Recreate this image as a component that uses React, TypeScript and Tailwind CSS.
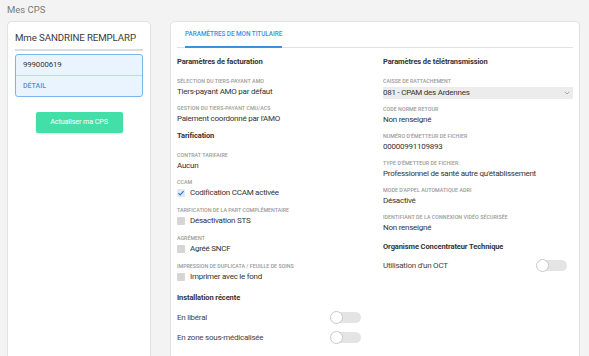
import { ChevronDown } from 'lucide-react';

type FieldProps = { label: string; value: string; className?: string };

function Field({ label, value, className = '' }: FieldProps) {
  return (
    <div className={className}>
      <div className="h-[8px] leading-[8px] text-[5.3px] font-medium uppercase text-[#9a9a9a] tracking-[0.05px]">
        {label}
      </div>
      <div className="mt-[2px] h-[10px] leading-[10px] text-[8px] text-[#333] tracking-[-0.25px] whitespace-nowrap">
        {value}
      </div>
    </div>
  );
}

function Check({ label, text, checked, className = '' }: { label: string; text: string; checked?: boolean; className?: string }) {
  return (
    <div className={className}>
      <div className="h-[8px] leading-[8px] text-[5.3px] font-medium uppercase text-[#9a9a9a]">{label}</div>
      <div className="mt-[2px] h-[10px] flex items-center gap-[5px]">
        {checked ? (
          <span className="w-[8px] h-[8px] rounded-[1px] bg-[#e3e9f0] flex items-center justify-center">
            <svg viewBox="0 0 10 10" className="w-[8px] h-[8px]">
              <path d="M1.8 5.2 L4 7.3 L8.4 2.6" fill="none" stroke="#2f80d8" strokeWidth="1.6" />
            </svg>
          </span>
        ) : (
          <span className="w-[8px] h-[8px] rounded-[1px] bg-[#d6d6d6]" />
        )}
        <span className="leading-[10px] text-[8px] text-[#333] tracking-[-0.25px]">{text}</span>
      </div>
    </div>
  );
}

function Heading({ children, className = '' }: { children: string; className?: string }) {
  return (
    <div className={`h-[12px] leading-[12px] text-[7.5px] font-bold text-[#333] tracking-[-0.1px] ${className}`}>
      {children}
    </div>
  );
}

function Toggle({ label, className = '' }: { label: string; className?: string }) {
  return (
    <div className={`h-[14px] flex items-center justify-between pr-[6px] ${className}`}>
      <span className="text-[8px] text-[#444] tracking-[-0.25px]">{label}</span>
      <span className="relative w-[30px] h-[11px] rounded-full bg-[#e4e4e4]">
        <span className="absolute -left-[1px] -top-[1px] w-[13px] h-[13px] rounded-full bg-white border-[1.5px] border-[#c9c9c9]" />
      </span>
    </div>
  );
}

export default function App() {
  return (
    <div className="w-[589px] h-[356px] overflow-hidden bg-[#f3f3f3] font-['Roboto',sans-serif]">
      <div className="pl-[7px] pt-[4px] h-[16px] leading-[12px] text-[9.5px] text-[#7a7a7a]">Mes CPS</div>

      <div className="mt-[5px] flex gap-[19px] pl-[7px]">
        {/* carte CPS */}
        <div className="w-[144px] h-[340px] bg-white border border-[#e2e2e2] rounded-t-[5px] px-[7px]">
          <div className="pt-[10px] h-[22px] leading-[12px] text-[9.7px] text-[#3a3a3a] tracking-[-0.1px] whitespace-nowrap">
            Mme SANDRINE REMPLARP
          </div>
          <div className="mt-[5px] h-[2px] bg-[#dcdcdc]" />
          <div className="mt-[3px] rounded-[3px] border border-[#7db5ea] bg-[#eaf4fe]">
            <div className="h-[21px] flex items-center px-[7px] border-b border-[#b9d8f5] text-[7.8px] text-[#333] tracking-[-0.1px]">
              999000619
            </div>
            <div className="h-[20px] flex items-center px-[7px] text-[7px] font-medium text-[#4a95dd]">DÉTAIL</div>
          </div>
          <div className="mt-[15px] mx-auto w-[87px] h-[21px] rounded-[2px] bg-[#42e0a8] shadow-[0_1px_2px_rgba(0,0,0,0.12)] flex items-center justify-center text-[7.2px] text-white tracking-[-0.1px]">
            Actualiser ma CPS
          </div>
        </div>

        {/* paramètres */}
        <div className="w-[410px] h-[340px] bg-white border border-[#e2e2e2] rounded-t-[5px] px-[6px]">
          <div className="flex border-b-[1.5px] border-[#e2e2e2]">
            <div className="ml-[8px] pt-[8px] pb-[7px] leading-[9px] text-[6.4px] font-medium text-[#3d8fe0] border-b-2 border-[#3d8fe0] -mb-[1.5px] tracking-[-0.05px]">
              PARAMÈTRES DE MON TITULAIRE
            </div>
          </div>

          <div className="grid grid-cols-2 gap-x-[16px] pt-[8px]">
            <div>
              <Heading className="mb-[9px]">Paramètres de facturation</Heading>
              <Field label="Sélection du tiers-payant AMO" value="Tiers-payant AMO par défaut" />
              <Field className="mt-[7px]" label="Gestion du tiers-payant CMU/ACS" value="Paiement coordonné par l'AMO" />
              <Heading className="mt-[6px] mb-[9px]">Tarification</Heading>
              <Field label="Contrat tarifaire" value="Aucun" />
              <Check className="mt-[7px]" label="CCAM" text="Codification CCAM activée" checked />
              <Check className="mt-[8px]" label="Tarification de la part complémentaire" text="Désactivation STS" />
              <Check className="mt-[8px]" label="Agrément" text="Agréé SNCF" />
              <Check className="mt-[8px]" label="Impression de duplicata / feuille de soins" text="Imprimer avec le fond" />
              <Heading className="mt-[10px]">Installation récente</Heading>
              <Toggle className="mt-[7px]" label="En libéral" />
              <Toggle className="mt-[6px]" label="En zone sous-médicalisée" />
            </div>

            <div>
              <Heading className="mb-[9px]">Paramètres de télétransmission</Heading>
              <div className="h-[8px] leading-[8px] text-[5.3px] font-medium uppercase text-[#9a9a9a]">Caisse de rattachement</div>
              <div className="mt-[2px] h-[12px] bg-[#ececec] flex items-center justify-between pr-[2px]">
                <span className="text-[8px] text-[#333] tracking-[-0.25px]">081 - CPAM des Ardennes</span>
                <ChevronDown className="w-[8px] h-[8px] text-[#888]" strokeWidth={2} />
              </div>
              <Field className="mt-[6px]" label="Code norme retour" value="Non renseigné" />
              <Field className="mt-[7px]" label="Numéro d'émetteur de fichier" value="00000991109893" />
              <Field className="mt-[7px]" label="Type d'émetteur de fichier" value="Professionnel de santé autre qu'établissement" />
              <Field className="mt-[7px]" label="Mode d'appel automatique ADRI" value="Désactivé" />
              <Field className="mt-[7px]" label="Identifiant de la connexion vidéo sécurisée" value="Non renseigné" />
              <Heading className="mt-[8px]">Organisme Concentrateur Technique</Heading>
              <Toggle className="mt-[6px]" label="Utilisation d'un OCT" />
            </div>
          </div>
        </div>
      </div>
    </div>
  );
}
